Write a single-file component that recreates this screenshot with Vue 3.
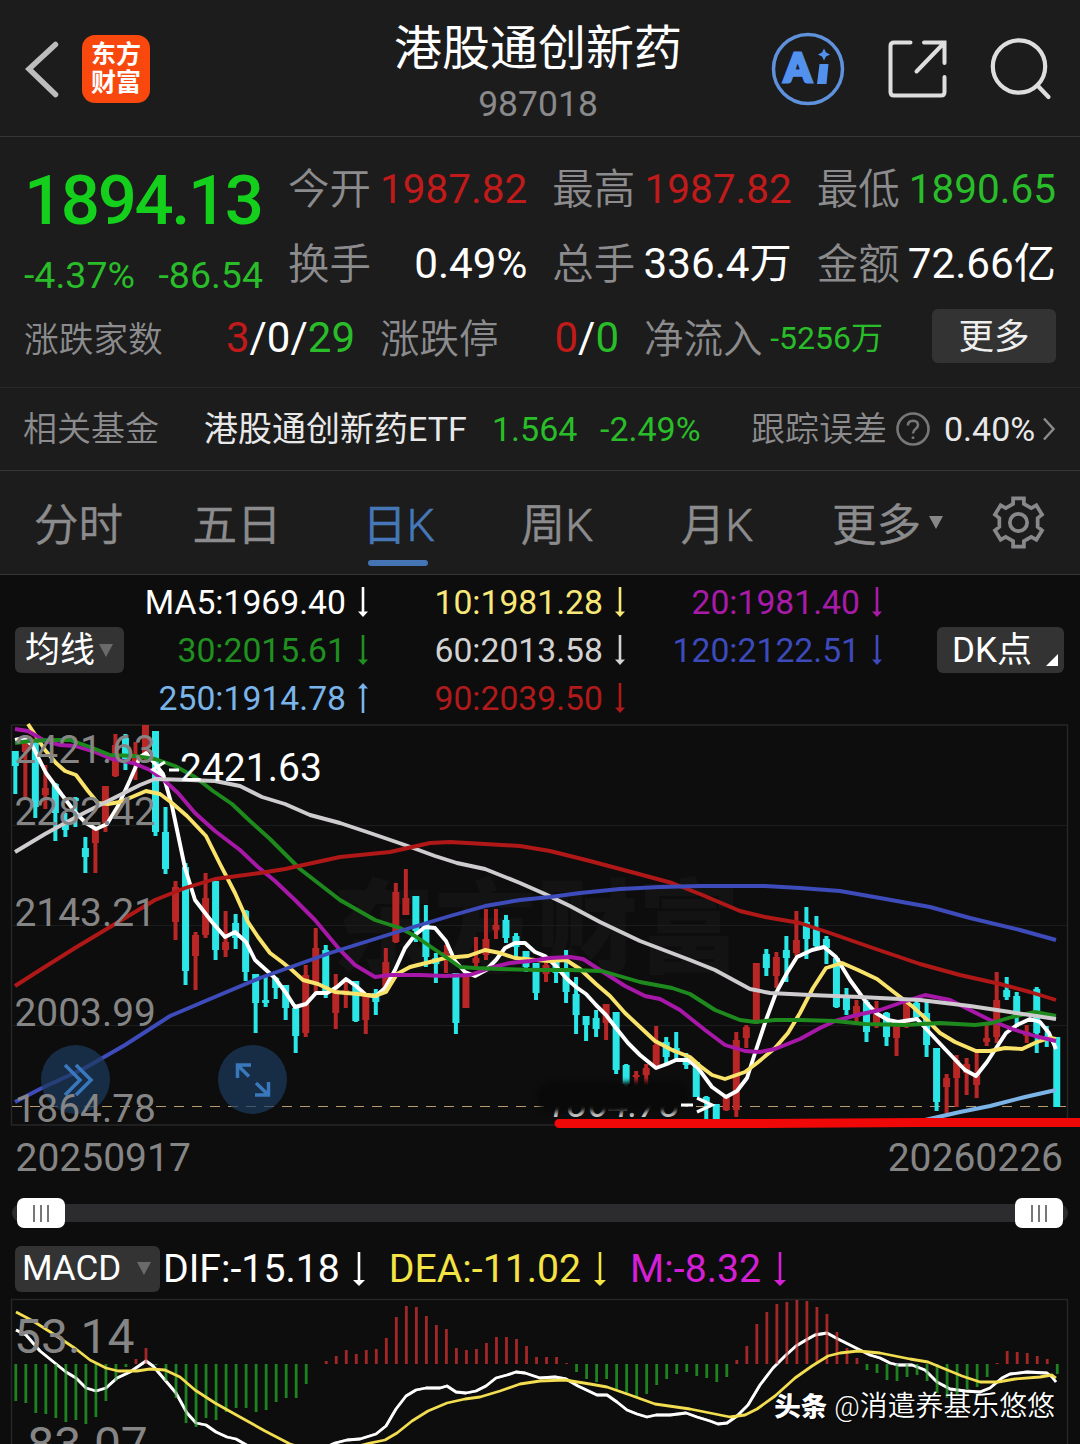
<!-- App.vue -->

<script setup>
const UP = '#b82626'
const DOWN = '#2ae6e6'

const quotes = [
  { label: '今开', value: '1987.82', tone: 'red' },
  { label: '最高', value: '1987.82', tone: 'red' },
  { label: '最低', value: '1890.65', tone: 'green' },
  { label: '换手', value: '0.49%', tone: 'white' },
  { label: '总手', value: '336.4万', tone: 'white' },
  { label: '金额', value: '72.66亿', tone: 'white' }
]

const tabs = ['分时', '五日', '日K', '周K', '月K']

const averages = [
  { text: 'MA5:1969.40', color: '#ffffff' },
  { text: '10:1981.28', color: '#f8e878' },
  { text: '20:1981.40', color: '#a81ba8' },
  { text: '30:2015.61', color: '#209020' },
  { text: '60:2013.58', color: '#d2d2d2' },
  { text: '120:2122.51', color: '#3c4abc' },
  { text: '250:1914.78', color: '#79b4ea', up: true },
  { text: '90:2039.50', color: '#b01a1a' }
]

const macdValues = [
  { text: 'DIF:-15.18', color: '#ffffff' },
  { text: 'DEA:-11.02', color: '#f3e344' },
  { text: 'M:-8.32', color: '#d41fd4' }
]

const axis = [
  { y: 763, text: '2421.63' },
  { y: 825, text: '2282.42' },
  { y: 926, text: '2143.21' },
  { y: 1026, text: '2003.99' },
  { y: 1122, text: '1864.78' }
]

// direction (1 up, 0 down), high, body top, body bottom, low
const rows = [
  [0, 751, 751, 766, 794], [1, 740, 742, 752, 797], [0, 740, 743, 807, 818], [1, 765, 788, 795, 809],
  [0, 783, 784, 813, 841], [0, 813, 822, 830, 837], [0, 797, 798, 801, 827], [0, 837, 848, 857, 873],
  [1, 827, 827, 843, 873], [1, 786, 786, 823, 832], [1, 734, 745, 776, 777], [0, 734, 738, 762, 770],
  [1, 742, 755, 764, 780], [1, 725, 725, 757, 760], [0, 731, 731, 832, 836], [0, 807, 832, 869, 874],
  [1, 881, 887, 922, 940], [0, 863, 867, 971, 985], [1, 932, 935, 956, 990], [1, 873, 898, 935, 938],
  [0, 881, 881, 950, 960], [1, 911, 942, 950, 957], [0, 914, 923, 938, 949], [0, 910, 911, 972, 981],
  [0, 974, 974, 1003, 1033], [0, 977, 1000, 1003, 1007], [0, 977, 978, 988, 999], [0, 985, 985, 1008, 1020],
  [0, 1008, 1008, 1036, 1053], [1, 965, 975, 1033, 1037], [1, 928, 948, 982, 995], [0, 945, 950, 993, 998],
  [1, 974, 993, 1013, 1029], [1, 982, 990, 994, 1008], [0, 981, 981, 1021, 1022], [1, 993, 993, 1020, 1034],
  [0, 989, 993, 1002, 1015], [1, 948, 962, 987, 993], [1, 883, 892, 942, 943], [1, 869, 898, 915, 915],
  [0, 896, 896, 931, 942], [0, 905, 923, 957, 967], [0, 953, 958, 964, 983], [1, 945, 952, 957, 973],
  [0, 973, 973, 1023, 1034], [1, 977, 977, 1008, 1008], [1, 937, 958, 963, 967], [1, 909, 939, 955, 960],
  [1, 909, 925, 930, 939], [0, 915, 920, 938, 943], [0, 933, 936, 947, 957], [0, 951, 951, 967, 972],
  [0, 963, 963, 993, 1000], [1, 962, 965, 974, 982], [0, 957, 960, 973, 983], [0, 950, 968, 992, 1003],
  [0, 977, 994, 1015, 1034], [0, 1016, 1016, 1025, 1041], [0, 1010, 1018, 1029, 1037], [1, 1004, 1004, 1023, 1040],
  [0, 1012, 1012, 1070, 1074], [0, 1064, 1065, 1084, 1090], [1, 1071, 1075, 1077, 1088], [1, 1064, 1068, 1075, 1085],
  [1, 1026, 1045, 1067, 1068], [0, 1037, 1042, 1057, 1064], [0, 1032, 1048, 1053, 1060], [0, 1053, 1060, 1065, 1069],
  [0, 1062, 1062, 1097, 1097], [0, 1096, 1097, 1102, 1119], [0, 1104, 1104, 1119, 1119], [1, 1097, 1097, 1110, 1111],
  [1, 1032, 1040, 1110, 1117], [1, 1025, 1027, 1038, 1048], [1, 963, 963, 1023, 1024], [0, 949, 954, 968, 976],
  [1, 952, 957, 976, 988], [0, 936, 950, 958, 982], [1, 911, 940, 953, 956], [0, 907, 922, 939, 959],
  [0, 916, 928, 946, 947], [0, 936, 939, 948, 964], [0, 958, 958, 1007, 1008], [0, 988, 997, 1010, 1015],
  [1, 1000, 1006, 1017, 1023], [0, 1000, 1002, 1032, 1042], [1, 1001, 1014, 1025, 1028], [0, 1012, 1013, 1037, 1046],
  [1, 1025, 1026, 1038, 1056], [1, 1003, 1003, 1025, 1028], [0, 998, 1003, 1017, 1018], [0, 1002, 1013, 1045, 1057],
  [0, 1048, 1048, 1102, 1111], [1, 1074, 1078, 1087, 1113], [1, 1055, 1060, 1078, 1107], [1, 1058, 1064, 1073, 1095],
  [1, 1052, 1073, 1085, 1098], [1, 1023, 1038, 1042, 1046], [1, 972, 1000, 1037, 1043], [0, 977, 990, 997, 1000],
  [0, 992, 996, 1015, 1027], [1, 1025, 1032, 1036, 1043], [0, 987, 989, 1033, 1053], [0, 1026, 1036, 1040, 1047],
  [0, 1037, 1037, 1107, 1107]
]

const xAt = (i) => 15.3 + i * 10.014

const candles = rows.map(([up, high, top, bottom, low], i) => ({
  x: xAt(i),
  fill: up ? UP : DOWN,
  high,
  top,
  bottom,
  low
}))

const lines = [
  { color: '#ffffff', points: '15,740 24,738 32,745 46,773 62,795 75,812 86,823 96,829 107,824 118,806 130,780 140,757 146,753 156,765 163,774 172,806 185,868 195,900 212,922 225,937 235,932 246,942 255,960 275,978 286,993 295,1007 306,1004 316,993 327,993 337,987 346,979 356,986 366,995 376,996 385,988 395,970 405,948 415,935 425,927 435,928 446,941 455,961 465,972 475,976 486,970 496,960 505,948 515,943 525,943 535,952 545,956 556,966 566,978 576,987 586,994 596,1005 606,1015 616,1028 628,1043 640,1055 656,1068 667,1064 676,1060 688,1060 698,1068 712,1087 726,1097 737,1091 747,1078 756,1050 766,1020 776,993 787,973 797,957 812,950 824,947 836,957 850,980 866,1002 876,1013 888,1020 898,1022 917,1019 930,1033 945,1049 965,1070 976,1076 987,1062 1006,1033 1017,1025 1030,1019 1040,1022 1049,1033 1056,1049' },
  { color: '#f9e36a', points: '28,724 34,733 45,750 56,763 65,771 76,775 88,791 98,803 108,804 120,802 132,797 146,791 160,794 172,803 187,816 206,836 220,864 235,893 248,922 258,937 270,953 282,962 292,970 303,980 318,984 335,992 358,994 375,996 386,992 397,974 410,967 430,962 445,958 468,956 485,950 500,953 515,958 535,960 550,961 566,960 580,969 596,984 610,996 625,1013 640,1027 655,1041 672,1050 690,1057 700,1066 712,1075 725,1079 745,1072 757,1063 775,1048 788,1033 800,1013 813,988 826,968 842,963 858,970 877,979 895,993 912,1006 925,1018 940,1033 955,1042 976,1051 990,1051 1005,1048 1022,1049 1037,1042 1050,1038 1056,1039' },
  { color: '#a818a8', points: '15,729 28,731 45,741 60,745 75,746 95,752 112,759 133,763 150,770 165,781 178,793 195,813 215,831 240,850 258,867 275,881 295,900 315,920 340,950 355,965 375,977 390,975 420,975 445,976 470,975 490,968 510,963 530,961 550,958 570,957 583,959 600,970 625,986 645,996 660,999 680,1010 705,1030 725,1045 745,1051 760,1052 775,1049 800,1039 820,1028 835,1021 857,1015 880,1010 900,1003 925,995 950,1000 970,1010 990,1020 1012,1029 1035,1036 1056,1041' },
  { color: '#1e8a1e', points: '15,743 30,741 50,740 70,740 90,747 110,755 135,756 155,759 175,766 195,777 213,791 232,804 250,821 270,839 300,869 340,900 375,920 400,928 415,936 440,953 460,967 475,968 500,969 540,970 570,970 602,971 640,982 672,988 690,994 715,1010 740,1020 755,1022 775,1020 800,1020 835,1021 865,1024 905,1025 940,1023 975,1025 992,1023 1012,1017 1035,1012 1056,1016' },
  { color: '#cfcccf', points: '15,852 45,834 80,815 110,800 140,785 155,779 190,780 215,781 240,786 262,797 285,804 310,815 340,823 370,833 405,845 435,856 457,863 485,869 520,883 545,894 570,906 600,922 640,941 690,960 715,970 750,989 770,993 810,995 860,997 920,1000 970,1006 1010,1012 1056,1019' },
  { color: '#b01818', points: '15,986 40,970 75,948 115,924 155,900 185,888 215,879 260,873 285,869 340,857 390,852 430,843 450,842 485,844 520,846 550,851 590,861 635,873 672,883 700,894 740,911 765,917 800,923 830,933 870,947 920,964 960,975 1000,984 1030,992 1056,1000' },
  { color: '#3d4cba', points: '15,1102 40,1089 85,1068 125,1045 170,1016 210,999 260,978 330,953 410,928 450,916 485,906 520,900 550,897 580,893 620,889 660,887 700,886 765,886 800,888 840,891 880,898 930,907 970,918 1020,930 1056,940' },
  { color: '#7db4e8', points: '925,1120 960,1112 990,1106 1025,1097 1056,1090' }
]

// far end of every MACD column, the zero line is at 1364
const ZERO = 1364
const bars = [
  1401, 1403, 1413, 1414, 1418, 1422, 1420, 1424, 1417, 1401, 1381, 1367, 1359, 1348, 1365,
  1381, 1398, 1423, 1427, 1418, 1420, 1412, 1408, 1408, 1412, 1410, 1402, 1398, 1398, 1384,
  1364, 1361, 1356, 1350, 1354, 1350, 1349, 1338, 1317, 1306, 1307, 1316, 1325, 1329, 1348,
  1350, 1349, 1343, 1337, 1337, 1339, 1346, 1357, 1357, 1357, 1363, 1372, 1379, 1382, 1379,
  1390, 1395, 1397, 1394, 1385, 1379, 1374, 1372, 1376, 1378, 1382, 1377, 1360, 1346, 1324,
  1312, 1304, 1302, 1300, 1301, 1307, 1314, 1332, 1348, 1358, 1370, 1373, 1380, 1381, 1377,
  1375, 1381, 1393, 1398, 1395, 1389, 1387, 1377, 1363, 1351, 1352, 1353, 1356, 1359, 1374
].map((y, i) => ({
  x: xAt(i) + 0.5,
  y: Math.min(y, ZERO),
  height: Math.abs(y - ZERO),
  fill: y < ZERO ? '#a52626' : '#1e8220'
}))

const dif = '16,1330 26,1335 40,1351 66,1372 76,1378 86,1388 96,1391 106,1388 117,1378 130,1372 146,1361 153,1366 165,1380 176,1393 187,1413 196,1423 206,1425 216,1432 227,1437 236,1439 250,1447 285,1462 320,1450 335,1443 347,1440 360,1439 376,1434 386,1426 396,1409 406,1396 416,1390 426,1388 440,1388 447,1386 456,1392 466,1393 476,1391 486,1386 496,1378 507,1375 516,1372 525,1373 540,1378 555,1377 566,1379 578,1386 597,1395 607,1395 617,1402 627,1410 637,1414 647,1417 656,1415 670,1415 686,1413 697,1417 710,1421 718,1424 727,1423 737,1416 748,1405 760,1385 773,1368 785,1356 796,1346 806,1340 815,1335 827,1333 838,1339 848,1344 860,1350 870,1355 880,1358 890,1363 898,1365 912,1365 925,1370 937,1382 950,1389 965,1391 980,1392 990,1388 1002,1378 1010,1374 1027,1372 1047,1373 1052,1377 1056,1382'
const dea = '16,1312 33,1321 55,1335 76,1349 90,1360 106,1368 118,1371 137,1371 150,1369 165,1370 180,1377 195,1390 215,1403 240,1417 265,1431 290,1444 325,1455 355,1447 370,1443 385,1440 397,1433 412,1421 428,1411 447,1403 465,1399 480,1397 500,1391 520,1384 540,1381 565,1380 590,1384 607,1387 630,1395 655,1404 690,1409 730,1417 745,1415 757,1409 775,1396 795,1378 812,1366 828,1356 840,1353 858,1351 880,1353 910,1359 928,1362 945,1369 962,1376 980,1382 998,1382 1015,1379 1040,1377 1052,1375 1056,1378'
</script>

<template>
  <div class="page">
    <header class="header">
      <div class="header-left">
        <svg class="back" viewBox="0 0 36 60">
          <path d="M31.500 6.500 L5 31 L31.500 56.500" />
        </svg>
        <div class="app-logo">
          <span>东方</span>
          <span>财富</span>
        </div>
      </div>
      <div class="title">
        <h1>港股通创新药</h1>
        <p>987018</p>
      </div>
      <div class="header-right">
        <svg class="ai" viewBox="0 0 74 74">
          <circle cx="37" cy="37" r="34.500" />
          <text x="13" y="49.500">A</text>
          <path d="M48.500 32 h9 l-2 20 h-9.500 z" />
          <path d="M53 16.500 l2 4 4 2 -4 2 -2 4 -2 -4 -4 -2 4 -2 z" />
        </svg>
        <svg class="share" viewBox="0 0 60 60">
          <path d="M22.500 3.500 H6 Q2.500 3.500 2.500 7 V53 Q2.500 56.500 6 56.500 H53 Q56.500 56.500 56.500 53 V38" />
          <path d="M36 3.500 H56.500 V24 M55.500 4.500 L28.500 32.500" />
        </svg>
        <svg class="search" viewBox="0 0 62 62">
          <circle cx="29" cy="28.500" r="26.200" />
          <path d="M47.500 47.500 L58.500 59" />
        </svg>
      </div>
    </header>

    <section class="quote">
      <div class="quote-top">
        <div class="price">
          <strong>1894.13</strong>
          <div class="change"><span>-4.37%</span><span>-86.54</span></div>
        </div>
        <div class="cells">
          <div v-for="q in quotes" :key="q.label" class="cell">
            <span class="label">{{ q.label }}</span>
            <span :class="q.tone">{{ q.value }}</span>
          </div>
        </div>
      </div>
      <div class="quote-bottom">
        <div class="count count-wide">
          <span class="label small">涨跌家数</span>
          <span><i class="red">3</i>/0/<i class="green">29</i></span>
        </div>
        <div class="count">
          <span class="label">涨跌停</span>
          <span><i class="red">0</i>/<i class="green">0</i></span>
        </div>
        <div class="count">
          <span class="label">净流入</span>
          <span class="green flow">-5256万</span>
        </div>
        <button class="more">更多</button>
      </div>
    </section>

    <section class="fund">
      <span class="label">相关基金</span>
      <span class="fund-name">港股通创新药ETF</span>
      <span class="green fund-price">1.564</span>
      <span class="green fund-rate">-2.49%</span>
      <span class="label fund-error">跟踪误差</span>
      <svg class="help" viewBox="0 0 34 34">
        <circle cx="17" cy="17" r="15.500" />
        <path d="M11.800 13.500 Q12 8.700 17 8.700 Q22 8.900 22 13 Q22 15.300 19.500 17 Q17 18.800 17 21.500 M17 24.500 V27" />
      </svg>
      <span class="fund-value">0.40%</span>
      <svg class="chevron" viewBox="0 0 14 24">
        <path d="M2 1.500 L11.500 12 L2 22.500" />
      </svg>
    </section>

    <nav class="tabs">
      <span v-for="tab in tabs" :key="tab" class="tab" :class="{ active: tab === '日K' }">{{ tab }}</span>
      <span class="tab tab-more">更多<b class="caret"></b></span>
      <svg class="gear" viewBox="0 0 54 54">
        <path d="M21.500 2.500 H32.500 V8 L40 12.300 L45.200 9.500 L51 19 L46.500 22.500 V31.500 L51 35 L45.200 44.500 L40 41.700 L32.500 46 V51.500 H21.500 V46 L14 41.700 L8.800 44.500 L3 35 L7.500 31.500 V22.500 L3 19 L8.800 9.500 L14 12.300 L21.500 8 Z" />
        <circle cx="27" cy="27" r="8.800" />
      </svg>
    </nav>

    <section class="legend">
      <button class="pill">均线<b class="caret dim"></b></button>
      <div class="averages">
        <span v-for="a in averages" :key="a.text" :style="{ color: a.color }">
          {{ a.text }}
          <svg viewBox="0 0 10 30" :class="{ flip: a.up }">
            <path class="stem" d="M5 0 V26" />
            <path class="head" d="M0 24.500 H10 L5 30 Z" />
          </svg>
        </span>
      </div>
      <button class="pill dk">DK点<b class="corner"></b></button>
    </section>

    <svg class="chart" viewBox="0 720 1080 412">
      <text class="brand" x="332" y="965">东方财富</text>
      <path class="grid" d="M12 825.500 H1067 M12 925.500 H1067 M12 1025.500 H1067" />
      <rect class="frame" x="11.500" y="725" width="1056" height="400" />
      <path class="last" d="M12 1106.500 H1067" />

      <g v-for="c in candles" :key="c.x" :fill="c.fill">
        <rect :x="c.x - 2" :y="c.high" width="4" :height="c.low - c.high" />
        <rect :x="c.x - 3.5" :y="c.top" width="7" :height="c.bottom - c.top" />
      </g>
      <polyline v-for="l in lines" :key="l.color" class="ma" :points="l.points" :stroke="l.color" />

      <g class="float">
        <circle cx="75.500" cy="1079.500" r="34.500" />
        <path d="M65 1065 L80 1080 L65 1095 M76 1065 L91 1080 L76 1095" />
        <circle cx="252.500" cy="1079.500" r="34.500" />
        <path d="M237.500 1078 V1065 H251 M238 1065.500 L249 1076.500 M268.500 1082 V1095 H255 M268 1094.500 L256 1083" />
      </g>

      <text v-for="a in axis" :key="a.text" class="axis" x="14.500" :y="a.y">{{ a.text }}</text>

      <path class="pointer" d="M165 762 L153 769.500 L165 777 M169 770 H179" />
      <text class="peak" x="180" y="781">2421.63</text>

      <!-- low price mark, smudged by hand -->
      <text class="low" x="546" y="1117">1864.78</text>
      <path class="smudge" d="M552 1097 L590 1096 L612 1098 L640 1096 L674 1097" />
      <path class="pointer" d="M681 1105 H693 M697 1098 L712 1105 L697 1112" />
      <path class="marker" d="M559 1123.500 L760 1123.500 L920 1122.500 H1090" />
    </svg>

    <div class="dates"><span>20250917</span><span>20260226</span></div>

    <div class="slider">
      <i class="thumb"><b></b><b></b><b></b></i>
      <i class="thumb"><b></b><b></b><b></b></i>
    </div>

    <section class="macd-head">
      <button class="pill macd-pill">MACD<b class="caret dim"></b></button>
      <span v-for="m in macdValues" :key="m.text" class="macd-value" :style="{ color: m.color }">
        {{ m.text }}
        <svg viewBox="0 0 12 34">
          <path class="stem" d="M6 0 V29" />
          <path class="head" d="M0 28 H12 L6 34 Z" />
        </svg>
      </span>
    </section>

    <svg class="macd" viewBox="0 1296 1080 148">
      <path class="frame" d="M11.500 1450 V1299.500 H1067.500 V1450" />
      <polyline class="thin" :points="dif" stroke="#ffffff" />
      <rect v-for="b in bars" :key="b.x" :x="b.x - 1.4" :y="b.y" width="2.800" :height="b.height" :fill="b.fill" />
      <polyline class="thin fine" :points="dif" stroke="#ffffff" />
      <polyline class="thin" :points="dea" stroke="#f2de50" />
      <text class="axis big" x="14" y="1353">53.14</text>
      <text class="axis big" x="14" y="1461">-83.07</text>
    </svg>

    <div class="author"><b>头条</b><span>@消遣养基乐悠悠</span></div>
  </div>
</template>

<style>
body {
  background: #0d0d0d;
}
</style>

<style scoped>
.page {
  position: relative;
  width: 1080px;
  height: 1444px;
  overflow: hidden;
  background: #0d0d0d;
  color: #fff;
  font-family: Roboto, 'Noto Sans CJK SC', sans-serif;
  font-weight: 400;
}

.page * {
  box-sizing: border-box;
}

svg {
  display: block;
  flex: none;
  fill: none;
}

i {
  font-style: normal;
}

button {
  border: 0;
  padding: 0;
  color: #fff;
  font-family: inherit;
  background: #333;
}

.red {
  color: #c01a1a;
}

.green {
  color: #29bd29;
}

.white {
  color: #fff;
}

.label {
  color: #8c8c8e;
  font-weight: 350;
}

.header {
  display: grid;
  grid-template-columns: 1fr 300px 1fr;
  height: 137px;
  padding: 0 28px 0 24px;
  background: #1c1c1c;
  border-bottom: 1px solid #353535;
}

.header-left {
  display: flex;
  gap: 22px;
  padding-top: 35px;
}

.back {
  width: 36px;
  height: 60px;
  margin-top: 3px;
  stroke: #bdbdbd;
  stroke-width: 5.5;
  stroke-linecap: round;
}

.app-logo {
  display: flex;
  flex-direction: column;
  align-items: center;
  justify-content: center;
  width: 68px;
  height: 68px;
  border-radius: 13px;
  background: #f9480e;
  font-size: 25px;
  font-weight: 700;
  line-height: 28px;
}

.title {
  text-align: center;
}

.title h1 {
  margin: 14px 0 0;
  font-size: 48px;
  font-weight: 400;
  line-height: 70px;
  white-space: nowrap;
}

.title p {
  margin: -1px 0 0;
  color: #8a8a8c;
  font-size: 35.500px;
  line-height: 42px;
}

.header-right {
  display: flex;
  align-items: center;
  justify-content: flex-end;
  gap: 42.500px;
  padding-top: 2px;
}

.ai {
  width: 74px;
  height: 74px;
}

.ai circle {
  stroke: #5f92dc;
  stroke-width: 3.5;
}

.ai path {
  fill: #5291ee;
}

.ai text {
  fill: #5291ee;
  stroke: #5291ee;
  stroke-width: 3;
  font-family: Lato, sans-serif;
  font-size: 39px;
  font-weight: 900;
}

.share {
  width: 60px;
  height: 60px;
  stroke: #dedede;
  stroke-width: 4;
  stroke-linecap: round;
}

.search {
  width: 62px;
  height: 62px;
  stroke: #dedede;
  stroke-width: 4.2;
  stroke-linecap: round;
}

.quote {
  height: 251px;
  padding: 26px 24px 0;
  background: #1c1c1c;
  border-bottom: 1px solid #292929;
}

.quote-top {
  display: flex;
  gap: 25px;
  height: 146px;
}

.price {
  width: 239px;
}

.price strong {
  display: block;
  color: #14cf1c;
  font-size: 69px;
  font-weight: 500;
  line-height: 76px;
  letter-spacing: -2.400px;
  white-space: nowrap;
}

.change {
  display: flex;
  justify-content: space-between;
  color: #29bd29;
  font-size: 37.500px;
  line-height: 44px;
  margin-top: 14px;
}

.cells {
  flex: 1;
  display: grid;
  grid-template-columns: repeat(3, 1fr);
  grid-auto-rows: 75px;
  column-gap: 25px;
  margin-top: -12px;
}

.cell {
  display: flex;
  align-items: center;
  justify-content: space-between;
  font-size: 41.500px;
  line-height: 50px;
  white-space: nowrap;
}

.cell .label {
  padding-top: 3px;
}

.cell .white {
  font-size: 42.200px;
}

.cell .red,
.cell .green {
  font-size: 40.500px;
}

.quote-bottom {
  display: flex;
  align-items: center;
  gap: 25px;
  height: 54px;
}

.count {
  display: flex;
  align-items: center;
  justify-content: space-between;
  width: 239px;
  padding-top: 4px;
  font-size: 42px;
  line-height: 50px;
  white-space: nowrap;
}

.count .label {
  padding-top: 4px;
  font-size: 39.500px;
}

.count-wide {
  width: 331px;
}

.count .small {
  font-size: 34.700px;
}

.count .flow {
  font-size: 32px;
}

.more {
  width: 124px;
  height: 54px;
  margin-left: auto;
  border-radius: 6px;
  color: #eee;
  font-size: 35.500px;
  line-height: 56px;
}

.fund {
  display: flex;
  align-items: center;
  height: 83px;
  padding: 0 24px 0 23px;
  background: #1c1c1c;
  border-bottom: 1px solid #353535;
  color: #e8e8e8;
  font-size: 34px;
  line-height: 40px;
  white-space: nowrap;
}

.fund-name {
  width: 288px;
  margin-left: 45px;
}

.fund-price {
  width: 108px;
}

.fund-rate {
  width: 151px;
}

.help {
  width: 34px;
  height: 34px;
  margin: 0 14px 0 9px;
  stroke: #77777a;
  stroke-width: 2.6;
}

.chevron {
  width: 14px;
  height: 24px;
  margin-left: auto;
  stroke: #8a8a8c;
  stroke-width: 2.5;
}

.tabs {
  display: flex;
  height: 104px;
  background: #1c1c1c;
  border-bottom: 1px solid #353535;
}

.tab {
  position: relative;
  width: 160px;
  color: #8c8c8e;
  font-size: 44.500px;
  font-weight: 350;
  line-height: 111px;
  text-align: center;
  -webkit-text-stroke: 0.5px currentColor;
}

.tab:first-child {
  width: 157px;
}

.active {
  color: #4678b8;
  padding-left: 3px;
}

.active::after {
  content: '';
  position: absolute;
  left: 51px;
  bottom: 8px;
  width: 60px;
  height: 6px;
  border-radius: 3px;
  background: #4474b4;
}

.tab-more {
  display: flex;
  align-items: center;
  gap: 8px;
  width: 195px;
  height: 111px;
  padding-left: 35px;
}

.caret {
  flex: none;
  margin-top: -8px;
  border: 7.5px solid transparent;
  border-top: 13px solid #88888a;
  border-bottom: 0;
}

.caret.dim {
  margin-top: -2px;
  border-top-color: #6a6a6a;
}

.gear {
  width: 53px;
  height: 53px;
  margin: 25px 0 0 0;
  stroke: #88888a;
  stroke-width: 3.8;
}

.legend {
  display: flex;
  align-items: center;
  justify-content: space-between;
  height: 145px;
  padding: 5px 16px 0 15px;
}

.pill {
  display: flex;
  align-items: center;
  gap: 4px;
  width: 109px;
  height: 46px;
  padding: 2px 0 0 10px;
  border-radius: 6px;
  font-size: 35px;
  line-height: 46px;
}

.dk {
  position: relative;
  width: 127px;
  padding-left: 15px;
}

.corner {
  position: absolute;
  right: 6px;
  bottom: 7px;
  border-left: 12px solid transparent;
  border-bottom: 12px solid #fff;
}

.averages {
  flex: 1;
  display: grid;
  grid-template-columns: 244px 257px 257px;
  grid-auto-rows: 48px;
}

.averages span {
  display: flex;
  align-items: center;
  justify-content: flex-end;
  gap: 12px;
  font-size: 33.700px;
}

.averages svg {
  width: 10px;
  height: 30px;
}

.flip {
  transform: rotate(180deg);
}

.stem {
  stroke: currentColor;
  stroke-width: 2.6;
}

.head {
  fill: currentColor;
}

.chart {
  width: 1080px;
  height: 412px;
}

.brand {
  fill: #131313;
  font-size: 102px;
  font-weight: 900;
}

.grid {
  stroke: #1c1c1c;
}

.frame {
  stroke: #262626;
  stroke-width: 1.5;
}

.last {
  stroke: #b59a6c;
  stroke-width: 1.2;
  stroke-dasharray: 10 8;
}

.ma {
  stroke-width: 3.9;
  stroke-linejoin: round;
}

.float circle {
  fill: #1c3a5e;
  fill-opacity: 0.7;
}

.float path {
  stroke: #3a78bd;
  stroke-width: 3.5;
}

.axis {
  fill: #858585;
  font-size: 38.900px;
}

.big {
  font-size: 48px;
}

.peak {
  fill: #fff;
  font-size: 39px;
}

.pointer {
  stroke: #fff;
  stroke-width: 3.2;
}

.low {
  fill: #ccc;
  font-size: 38px;
  font-style: italic;
}

.smudge {
  stroke: #090909;
  stroke-width: 30;
  stroke-linecap: round;
  stroke-linejoin: round;
  filter: blur(2.5px);
}

.marker {
  stroke: #f00808;
  stroke-width: 9;
  stroke-linecap: round;
}

.dates {
  display: flex;
  justify-content: space-between;
  padding: 3px 17px 0 15.500px;
  color: #858585;
  font-size: 39px;
  line-height: 46px;
}

.slider {
  display: flex;
  align-items: center;
  justify-content: space-between;
  width: 1056px;
  height: 18px;
  margin: 23px 0 0 12px;
  padding: 0 5px;
  border-radius: 9px;
  background: #2c2c2e;
}

.thumb {
  display: flex;
  justify-content: center;
  align-items: center;
  gap: 4.500px;
  width: 48px;
  height: 30px;
  border-radius: 7px;
  background: #fff;
}

.thumb b {
  width: 2.500px;
  height: 17px;
  background: #777;
}

.macd-head {
  display: flex;
  align-items: center;
  height: 74px;
  padding: 19px 0 0 15px;
}

.macd-pill {
  justify-content: space-between;
  width: 145px;
  padding: 1px 9px 0 7px;
  margin-right: 3px;
}

.macd-value {
  display: flex;
  align-items: center;
  gap: 13px;
  margin-right: 24px;
  font-size: 39.200px;
}

.macd-value svg {
  width: 12px;
  height: 34px;
}

.macd {
  width: 1080px;
  height: 148px;
}

.thin {
  stroke-width: 2.8;
  stroke-linejoin: round;
}

.fine {
  stroke-opacity: 0.5;
}

.author {
  position: absolute;
  right: 25px;
  bottom: 18px;
  display: flex;
  align-items: center;
  gap: 7px;
  font-size: 27.900px;
  font-weight: 350;
  line-height: 38px;
  text-shadow: 1px 1px 2px #000;
}

.author b {
  font-weight: 900;
  font-size: 26.500px;
}
</style>
